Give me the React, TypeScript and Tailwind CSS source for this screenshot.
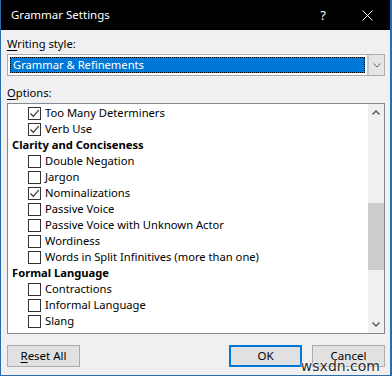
import React from 'react';

type Row = { type: 'item'; label: string; checked?: boolean } | { type: 'head'; label: string };

const rows: Row[] = [
  { type: 'item', label: 'Too Many Determiners', checked: true },
  { type: 'item', label: 'Verb Use', checked: true },
  { type: 'head', label: 'Clarity and Conciseness' },
  { type: 'item', label: 'Double Negation' },
  { type: 'item', label: 'Jargon' },
  { type: 'item', label: 'Nominalizations', checked: true },
  { type: 'item', label: 'Passive Voice' },
  { type: 'item', label: 'Passive Voice with Unknown Actor' },
  { type: 'item', label: 'Wordiness' },
  { type: 'item', label: 'Words in Split Infinitives (more than one)' },
  { type: 'head', label: 'Formal Language' },
  { type: 'item', label: 'Contractions' },
  { type: 'item', label: 'Informal Language' },
  { type: 'item', label: 'Slang' },
  { type: 'head', label: 'Inclusiveness' },
];

const font = { fontFamily: '"Noto Sans", "Open Sans", sans-serif' };

export default function App() {
  return (
    <div
      className="relative w-[392px] h-[376px] bg-[#f0f0f0] border-l border-r-2 border-b border-[#2b6cb0] flex flex-col text-[11.2px] text-black overflow-hidden"
      style={font}
    >
      {/* title bar */}
      <div className="h-[30px] shrink-0 bg-black text-white flex items-center pl-[10px]">
        <span className="text-[11.5px] leading-none">Grammar Settings</span>
        <span className="ml-auto text-[13px] w-[10px] text-center leading-none mr-[34px]">?</span>
        <svg width="11" height="11" viewBox="0 0 11 11" className="mr-[17px]">
          <path d="M0.5 0.5 L10.5 10.5 M10.5 0.5 L0.5 10.5" stroke="white" strokeWidth="1" fill="none" />
        </svg>
      </div>

      <div className="flex flex-col pl-[6px] pr-[5px]">
        <div className="mt-[6px] h-[16px] leading-[16px]">
          <span className="underline underline-offset-2">W</span>riting style:
        </div>

        <div className="mt-[2px] h-[22px] flex bg-white border border-[#adadad]">
          <div className="flex-1 p-[2px]">
            <div className="h-full bg-[#0078d7] border border-dotted border-black text-white leading-[14px] pl-[2px]">
              Grammar &amp; Refinements
            </div>
          </div>
          <div className="w-[17px] bg-[#e5e5e5] border-l-2 border-[#c6c6c6] flex items-center justify-center">
            <svg width="8" height="5" viewBox="0 0 8 5">
              <path d="M0.5 0.5 L4 4 L7.5 0.5" stroke="#606060" strokeWidth="1" fill="none" />
            </svg>
          </div>
        </div>

        <div className="mt-[9px] h-[16px] leading-[16px]">
          <span className="underline underline-offset-2">O</span>ptions:
        </div>

        <div className="mt-[2px] h-[231px] flex bg-white border border-[#828790] overflow-hidden">
          <div className="flex-1 pt-[1px] overflow-hidden">
            {rows.map((r) =>
              r.type === 'head' ? (
                <div key={r.label} className="h-[16px] leading-[16px] pl-[4px] font-bold whitespace-nowrap">
                  {r.label}
                </div>
              ) : (
                <div key={r.label} className="h-[16px] flex items-center pl-[20px] whitespace-nowrap">
                  <div className="w-[13px] h-[13px] border border-[#333333] bg-white flex items-center justify-center">
                    {r.checked && (
                      <svg width="11" height="11" viewBox="0 0 11 11">
                        <path d="M1.5 5.5 L4.2 8.3 L9.8 2.2" stroke="#333333" strokeWidth="1.2" fill="none" />
                      </svg>
                    )}
                  </div>
                  <span className="ml-[4px] leading-[16px]">{r.label}</span>
                </div>
              )
            )}
          </div>
          <div className="w-[16px] bg-[#f0f0f0] flex flex-col">
            <div className="h-[17px] flex items-center justify-center">
              <svg width="8" height="5" viewBox="0 0 8 5">
                <path d="M0.5 4.5 L4 1 L7.5 4.5" stroke="#606060" strokeWidth="1.5" fill="none" />
              </svg>
            </div>
            <div className="mt-[82px] h-[67px] bg-[#cdcdcd]" />
            <div className="mt-auto h-[17px] flex items-center justify-center">
              <svg width="8" height="5" viewBox="0 0 8 5">
                <path d="M0.5 0.5 L4 4 L7.5 0.5" stroke="#606060" strokeWidth="1.5" fill="none" />
              </svg>
            </div>
          </div>
        </div>

        <div className="mt-[11px] flex">
          <button className="w-[73px] h-[22px] bg-[#e1e1e1] border border-[#adadad] text-[11.5px]" style={font}>
            <span className="underline underline-offset-2">R</span>eset All
          </button>
          <button className="ml-auto w-[73px] h-[22px] bg-[#e1e1e1] border-2 border-[#0078d7] text-[11.5px]" style={font}>
            OK
          </button>
          <button className="ml-[10px] w-[73px] h-[22px] bg-[#e1e1e1] border border-[#adadad] text-[11.5px]" style={font}>
            Cancel
          </button>
        </div>
      </div>

      <div
        className="absolute right-[10px] bottom-[2px] text-[14px] leading-none text-[#2a2a2a]"
        style={{ fontFamily: '"DejaVu Sans", sans-serif', textShadow: '0 0 2px #fff, 0 0 2px #fff' }}
      >
        wsxdn.com
      </div>
    </div>
  );
}
